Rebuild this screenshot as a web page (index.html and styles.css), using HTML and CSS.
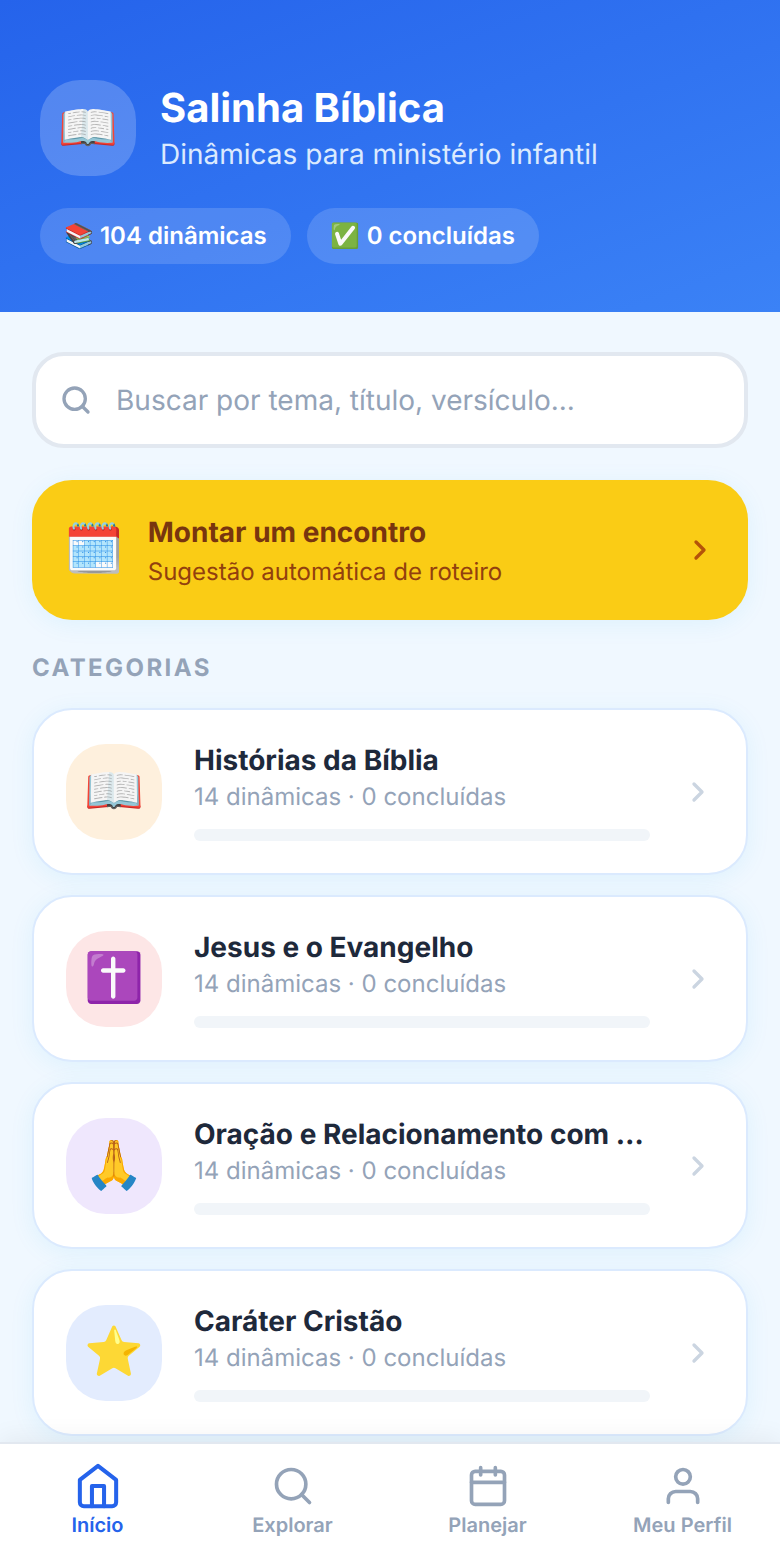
FILE: index.html
```html
<!DOCTYPE html>
<html lang="pt-BR">
<head>
<meta charset="utf-8">
<meta name="viewport" content="width=device-width, initial-scale=1">
<title>Salinha Bíblica</title>
<link rel="stylesheet" href="styles.css">
</head>
<body>
<header class="header">
  <div class="brand">
    <div class="brand-logo">📖</div>
    <div class="brand-text">
      <h1 class="brand-title">Salinha Bíblica</h1>
      <p class="brand-subtitle">Dinâmicas para ministério infantil</p>
    </div>
  </div>
  <div class="stats">
    <span class="pill">📚 104 dinâmicas</span>
    <span class="pill">✅ 0 concluídas</span>
  </div>
</header>

<main class="main">
  <label class="search">
    <svg class="search-icon" viewBox="0 0 24 24" aria-hidden="true"><circle cx="11" cy="11" r="8"/><path d="m21 21-4.35-4.35"/></svg>
    <input class="search-input" type="search" placeholder="Buscar por tema, título, versículo..." aria-label="Buscar dinâmicas">
  </label>

  <button class="planner" type="button">
    <span class="planner-emoji">🗓️</span>
    <span class="planner-text">
      <span class="planner-title">Montar um encontro</span>
      <span class="planner-subtitle">Sugestão automática de roteiro</span>
    </span>
    <svg class="chevron" viewBox="0 0 24 24" aria-hidden="true"><path d="m9 18 6-6-6-6"/></svg>
  </button>

  <h2 class="section-title">CATEGORIAS</h2>
  <div class="categories">
    <a class="card" href="#historias">
      <span class="card-icon card-icon-orange">📖</span>
      <span class="card-body">
        <span class="card-title">Histórias da Bíblia</span>
        <span class="card-meta">14 dinâmicas · 0 concluídas</span>
        <span class="card-progress"></span>
      </span>
      <svg class="chevron" viewBox="0 0 24 24" aria-hidden="true"><path d="m9 18 6-6-6-6"/></svg>
    </a>
    <a class="card" href="#jesus">
      <span class="card-icon card-icon-red">✝️</span>
      <span class="card-body">
        <span class="card-title">Jesus e o Evangelho</span>
        <span class="card-meta">14 dinâmicas · 0 concluídas</span>
        <span class="card-progress"></span>
      </span>
      <svg class="chevron" viewBox="0 0 24 24" aria-hidden="true"><path d="m9 18 6-6-6-6"/></svg>
    </a>
    <a class="card" href="#oracao">
      <span class="card-icon card-icon-purple">🙏</span>
      <span class="card-body">
        <span class="card-title">Oração e Relacionamento com Deus</span>
        <span class="card-meta">14 dinâmicas · 0 concluídas</span>
        <span class="card-progress"></span>
      </span>
      <svg class="chevron" viewBox="0 0 24 24" aria-hidden="true"><path d="m9 18 6-6-6-6"/></svg>
    </a>
    <a class="card" href="#carater">
      <span class="card-icon card-icon-blue">⭐</span>
      <span class="card-body">
        <span class="card-title">Caráter Cristão</span>
        <span class="card-meta">14 dinâmicas · 0 concluídas</span>
        <span class="card-progress"></span>
      </span>
      <svg class="chevron" viewBox="0 0 24 24" aria-hidden="true"><path d="m9 18 6-6-6-6"/></svg>
    </a>
  </div>
</main>

<nav class="nav">
  <a class="nav-item nav-item-active" href="#inicio" aria-current="page">
    <svg class="nav-icon" viewBox="0 0 24 24" aria-hidden="true"><path d="m3 9 9-7 9 7v11a2 2 0 0 1-2 2H5a2 2 0 0 1-2-2z"/><path d="M9 22V12h6v10"/></svg>
    <span>Início</span>
  </a>
  <a class="nav-item" href="#explorar">
    <svg class="nav-icon" viewBox="0 0 24 24" aria-hidden="true"><circle cx="11" cy="11" r="8"/><path d="m21 21-4.35-4.35"/></svg>
    <span>Explorar</span>
  </a>
  <a class="nav-item" href="#planejar">
    <svg class="nav-icon" viewBox="0 0 24 24" aria-hidden="true"><rect x="3" y="4" width="18" height="18" rx="2"/><path d="M16 2v4M8 2v4M3 10h18"/></svg>
    <span>Planejar</span>
  </a>
  <a class="nav-item" href="#perfil">
    <svg class="nav-icon" viewBox="0 0 24 24" aria-hidden="true"><path d="M20 21v-2a4 4 0 0 0-4-4H8a4 4 0 0 0-4 4v2"/><circle cx="12" cy="7" r="4"/></svg>
    <span>Meu Perfil</span>
  </a>
</nav>
</body>
</html>
```
FILE: styles.css
```css
* { box-sizing: border-box; }

body {
  margin: 0;
  min-height: 100vh;
  display: flex;
  flex-direction: column;
  background: #f0f8ff;
  color: #1e293b;
  font-family: Inter, "Liberation Sans", sans-serif;
  text-rendering: geometricPrecision;
}

h1, h2, p { margin: 0; }
a { color: inherit; text-decoration: none; }

svg {
  flex: none;
  fill: none;
  stroke: currentColor;
  stroke-linecap: round;
  stroke-linejoin: round;
}

/* Header */
.header {
  display: flex;
  flex-direction: column;
  gap: 32px;
  padding: 80px 40px 48px;
  background: linear-gradient(160deg, #2563eb, #3b82f6);
  color: #fff;
}
.brand { display: flex; align-items: center; gap: 24px; }
.brand-logo {
  display: flex;
  align-items: center;
  justify-content: center;
  width: 96px;
  height: 96px;
  padding-bottom: 4px;
  border-radius: 40px;
  background: rgba(255, 255, 255, 0.2);
  font-size: 48px;
}
.brand-title { font-size: 40px; line-height: 52px; font-weight: 700; }
.brand-subtitle { font-size: 28px; line-height: 40px; color: #dbeafe; }
.stats { display: flex; flex-wrap: wrap; gap: 16px; }
.pill {
  padding: 10px 24px;
  border-radius: 28px;
  background: rgba(255, 255, 255, 0.15);
  font-size: 24px;
  line-height: 36px;
  font-weight: 600;
}

/* Content */
.main { flex: 1; padding: 40px 32px 6px; }
.search {
  display: flex;
  align-items: center;
  gap: 24px;
  height: 96px;
  padding: 0 24px;
  border: 4px solid #e2e8f0;
  border-radius: 32px;
  background: #fff;
  color: #94a3b8;
}
.search-icon { width: 32px; height: 32px; stroke-width: 2.5; }
.search-input {
  flex: 1;
  min-width: 0;
  padding: 0;
  border: 0;
  outline: 0;
  background: none;
  color: #1e293b;
  font-family: inherit;
  font-size: 28px;
  text-rendering: inherit;
}
.search-input::placeholder { color: #94a3b8; }

.planner {
  display: flex;
  align-items: center;
  gap: 24px;
  width: 100%;
  margin-top: 32px;
  padding: 32px;
  border: 0;
  border-radius: 40px;
  background: #facc15;
  box-shadow: 0 4px 24px rgba(14, 165, 233, 0.08);
  color: #b45309;
  font-family: inherit;
  text-align: left;
  text-rendering: inherit;
}
.planner-emoji { padding-bottom: 4px; font-size: 48px; line-height: 60px; }
.planner-text { display: flex; flex: 1; flex-direction: column; gap: 4px; }
.planner-title { font-size: 28px; line-height: 40px; font-weight: 700; color: #78350f; }
.planner-subtitle { font-size: 24px; line-height: 32px; color: #92400e; }
.chevron { width: 32px; height: 32px; stroke-width: 2.5; }

.section-title {
  margin: 32px 0 24px;
  color: #94a3b8;
  font-size: 24px;
  line-height: 32px;
  font-weight: 700;
  letter-spacing: 0.1em;
}

.categories { display: flex; flex-direction: column; gap: 20px; }
.card {
  display: flex;
  align-items: center;
  gap: 32px;
  padding: 32px;
  border: 2px solid #dbeafe;
  border-radius: 40px;
  background: #fff;
  box-shadow: 0 4px 24px rgba(14, 165, 233, 0.08);
}
.card-icon {
  display: flex;
  flex: none;
  align-items: center;
  justify-content: center;
  width: 96px;
  height: 96px;
  padding-bottom: 4px;
  border-radius: 40px;
  font-size: 48px;
}
.card-icon-orange { background: #fef0dd; }
.card-icon-red { background: #fde6e6; }
.card-icon-purple { background: #efe7fd; }
.card-icon-blue { background: #e3ecfe; }
.card-body { display: flex; flex: 1; flex-direction: column; min-width: 0; }
.card-title {
  overflow: hidden;
  font-size: 28px;
  line-height: 37px;
  font-weight: 700;
  text-overflow: ellipsis;
  white-space: nowrap;
}
.card-meta { color: #94a3b8; font-size: 24px; line-height: 36px; }
.card-progress { height: 12px; margin-top: 14px; border-radius: 6px; background: #f1f5f9; }
.card .chevron { color: #cbd5e1; }

/* Bottom navigation */
.nav {
  position: sticky;
  bottom: 0;
  display: grid;
  grid-template-columns: repeat(4, 1fr);
  padding: 20px 0 22px;
  border-top: 2px solid #e2e8f0;
  background: #fff;
  box-shadow: 0 -4px 24px rgba(0, 0, 0, 0.06);
}
.nav-item {
  display: flex;
  flex-direction: column;
  align-items: center;
  gap: 4px;
  color: #94a3b8;
  font-size: 20px;
  line-height: 26px;
  font-weight: 600;
}
.nav-icon { width: 44px; height: 44px; stroke-width: 2; }
.nav-item-active { color: #2563eb; }
.nav-item-active .nav-icon { transform: scale(1.1); }
```
